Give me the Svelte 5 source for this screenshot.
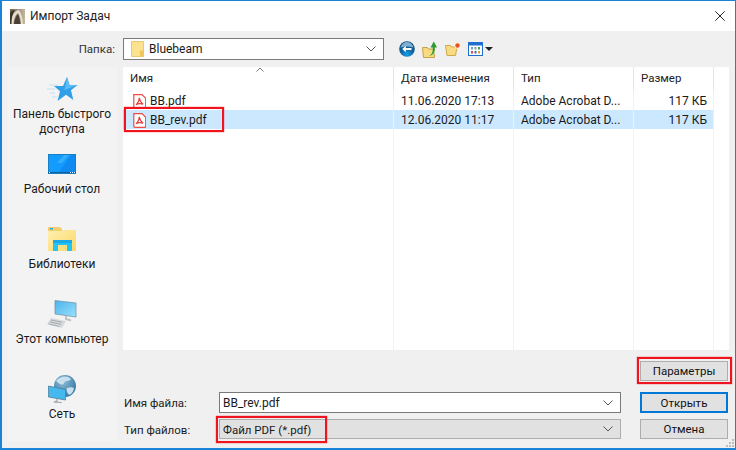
<script>
  const places = [
    { id: 'star', label: ['Панель быстрого', 'доступа'] },
    { id: 'desk', label: ['Рабочий стол'] },
    { id: 'lib', label: ['Библиотеки'] },
    { id: 'pc', label: ['Этот компьютер'] },
    { id: 'net', label: ['Сеть'] }
  ];
  const cols = [
    { name: 'Имя', cls: 'c-name' },
    { name: 'Дата изменения', cls: 'c-date' },
    { name: 'Тип', cls: 'c-type' },
    { name: 'Размер', cls: 'c-size' }
  ];
  const files = [
    { name: 'BB.pdf', date: '11.06.2020 17:13', type: 'Adobe Acrobat D...', size: '117 КБ' },
    { name: 'BB_rev.pdf', date: '12.06.2020 11:17', type: 'Adobe Acrobat D...', size: '117 КБ', sel: true }
  ];
</script>

{#snippet pdf()}
  <svg class="pdf" width="13" height="15" viewBox="0 0 13 15">
    <path d="M1.500.6h7.200l3.700 3.700v9a1 1 0 0 1-1 1h-9.900a1 1 0 0 1-1-1v-12.700z" fill="#fff" stroke="#ee4b45" stroke-width="1.200" transform="translate(.3 0)"/>
    <path d="M6.300 3.800c.6 3 1.700 5 3.800 6.500M6.300 3.800c0 3-1.200 5.200-3.200 7M3.100 10.800c2-1.300 4.400-1.500 7-.5" fill="none" stroke="#e0403a" stroke-width="1.100"/>
  </svg>
{/snippet}

{#snippet chevron()}
  <svg class="chev" width="10" height="6" viewBox="0 0 10 6"><path d="M.5.500 5 5 9.500.5" fill="none" stroke="#555"/></svg>
{/snippet}

<div class="win">
  <header class="title">
    <svg class="appicon" width="15" height="15" viewBox="0 0 15 15">
      <defs><linearGradient id="ap" x1="0" y1="0" x2="1" y2="0"><stop offset="0" stop-color="#6d6350"/><stop offset="1" stop-color="#c4b89f"/></linearGradient></defs>
      <rect width="15" height="15" fill="url(#ap)"/>
      <path d="M0 15C1 7 4 2 9 1c2 3 4 8 4 14h-2C11 10 9.500 6 8 4 5 6 4 10 3.500 15z" fill="#e6dfcf"/>
      <path d="M0 15V4c1-2 3-3 5-3C2.500 4 1.500 9 1.500 15z" fill="#3c3427"/>
      <path d="M4 15c.5-4 2-8 4-10 1 2 2 6 2.500 10z" fill="#4b4132"/>
    </svg>
    <span class="ttl">Импорт Задач</span>
    <svg class="close" width="10" height="10" viewBox="0 0 10 10"><path d="M.3.300l9.400 9.400M9.700.3.300 9.700" stroke="#222" fill="none"/></svg>
  </header>

  <div class="body">
    <div class="folderbar">
      <label class="lbl-folder" for="f">Папка:</label>
      <div class="combo folder" id="f">
        <svg width="13" height="16" viewBox="0 0 13 16">
          <path d="M.5.500h12v15H.5z" fill="#fbe290" stroke="#e8c974"/>
          <path d="M9 9.500h3.500v6H9z" fill="#f0c55c"/>
        </svg>
        <span class="fname">Bluebeam</span>
        {@render chevron()}
      </div>
      <div class="tools">
        <svg width="16" height="16" viewBox="0 0 16 16">
          <defs><radialGradient id="bk" cx=".5" cy=".85" r=".8"><stop offset="0" stop-color="#12a0e8"/><stop offset=".55" stop-color="#135f9a"/><stop offset="1" stop-color="#0f4a7c"/></radialGradient></defs>
          <circle cx="8" cy="8" r="7.800" fill="url(#bk)"/>
          <path d="M1.500 6.500C2.500 3 5 1 8 1s5.500 2 6.500 5.500C10 5 6 5 1.500 6.500z" fill="#7fb0d2"/>
          <path d="M3.200 8l3.600-3.200v2.200h5.700v2.100H6.800v2.200z" fill="#fff"/>
        </svg>
        <svg width="15" height="17" viewBox="0 0 15 17">
          <path d="M.5 6.500h5l1 1.500h5l1 8.500H1.500z" fill="#f8da80" stroke="#c7a244"/>
          <path d="M7 15c3-1.500 4-4 3.800-8.500H8.500L11.800.5 15 6.500h-2.200C13.300 11 11 14.500 7 15z" fill="#2c9a31"/>
        </svg>
        <svg class="newf" width="16" height="14" viewBox="0 0 16 14">
          <path d="M.5 3.500h5l1 1.500h5.500l-1.500 8.500H2z" fill="#f8dc84" stroke="#cfa94a"/>
          <circle cx="12.500" cy="3.500" r="3.200" fill="#fff3d0"/>
          <circle cx="12.500" cy="3.500" r="2.200" fill="#e9502a"/>
        </svg>
        <span class="viewbtn">
          <svg width="15" height="14" viewBox="0 0 15 14">
            <rect x=".5" y=".5" width="14" height="13" fill="#fff" stroke="#1f6fd0"/>
            <rect x="1" y="1" width="13" height="2.500" fill="#1f6fd0"/>
            <path d="M3 5h2v2.500H3z" fill="#6f9bd0"/><path d="M6.500 5h2v2.500h-2z" fill="#8a96a8"/><path d="M10 5h2v2.500h-2z" fill="#49a04a"/>
            <path d="M3 9h2v2.500H3z" fill="#d04a3a"/><path d="M6.500 9h2v2.500h-2z" fill="#2d6cc0"/><path d="M10 9h2v2.500h-2z" fill="#e0a030"/>
          </svg>
          <i class="caret"></i>
        </span>
      </div>
    </div>

    <div class="main">
      <nav class="places">
        {#each places as p}
          <div class="place">
            <div class="picon {p.id}">
              {#if p.id === 'star'}
                <svg width="32" height="25" viewBox="0 2 32 25">
                  <path d="M3 10h9M1 14h8M4 18h5M6 22h5" stroke="#bfe0f5"/>
                  <path d="M21 2l2.500 8h8l-6.500 5.200 2.300 9.800-7.300-5.200L11.500 26l2.500-9.800-6-5.200h9z" fill="#2f9fe8"/>
                  <path d="M21 2l2.500 8h8l-13 5z" fill="#5cbcf5"/>
                </svg>
              {:else if p.id === 'desk'}
                <svg width="28" height="20" viewBox="0 0 28 20">
                  <rect width="28" height="20" fill="#1a7fc0"/>
                  <rect x="1" y="1" width="26" height="17" fill="#139bff"/>
                  <path d="M11 18 23 1h4v17z" fill="#0f8af0"/>
                  <path d="M14 9 21 1h-5L9 9z" fill="#35aeff"/>
                  <path d="M0 18.500h28" stroke="#0f5f98"/>
                  <path d="M1 18.500h1M22 18.500h1M24 18.500h1M26 18.500h1" stroke="#fff"/>
                </svg>
              {:else if p.id === 'lib'}
                <svg width="28" height="24" viewBox="0 0 28 24">
                  <defs><linearGradient id="lf" x1="0" y1="0" x2="1" y2="1"><stop offset="0" stop-color="#ffefb0"/><stop offset="1" stop-color="#fbd768"/></linearGradient></defs>
                  <path d="M0 3h28v21H0z" fill="url(#lf)"/>
                  <path d="M0 0h12l2 2v2H0z" fill="#f2cf6e"/>
                  <path d="M2 1h3v1.500H2z" fill="#2aa8e0"/>
                  <path d="M5 13h19v11h-5v-6h-9v6H5z" fill="#24c3f2"/>
                  <path d="M5 13h19v3H5z" fill="#1aa9e6"/>
                </svg>
              {:else if p.id === 'pc'}
                <svg width="30" height="28" viewBox="0 0 30 28">
                  <defs><linearGradient id="pm" x1="0" y1="0" x2="1" y2="1"><stop offset="0" stop-color="#4ab4ee"/><stop offset="1" stop-color="#9be0fb"/></linearGradient></defs>
                  <path d="M8 .5l21 2.500v14L8 14z" fill="url(#pm)" stroke="#6a8ea4" stroke-width=".7"/>
                  <path d="M19 16v3l5 1.500" stroke="#bcc2c6" stroke-width="2" fill="none"/>
                  <path d="M4 18l15 3-4 7L0 24z" fill="#d6d9db"/>
                  <path d="M4 20l11 2.200M3 22l11 2.300M1.500 24l11 2.500" stroke="#a6abae"/>
                </svg>
              {:else}
                <svg width="28" height="28" viewBox="0 0 28 28">
                  <defs><radialGradient id="gl" cx=".4" cy=".3" r=".8"><stop offset="0" stop-color="#8cbcd8"/><stop offset="1" stop-color="#2c6f9c"/></radialGradient></defs>
                  <circle cx="17" cy="11" r="11" fill="url(#gl)"/>
                  <path d="M8 6c4-5 11-6 15-2-2 3-6 1-7 4s-5 1-8-2zM19 13c3-1 5-1 7 0-1 4-2 6-5 7-2-2-3-5-2-7z" fill="#c8e0ee"/>
                  <path d="M.5 11l17 3.500V25L.5 22z" fill="#45b8ee" stroke="#50809c" stroke-width=".8"/>
                  <path d="M9 24v2l-3 1 8 .8" stroke="#aab2b8" stroke-width="1.400" fill="none"/>
                </svg>
              {/if}
            </div>
            {#each p.label as l}<div class="plabel">{l}</div>{/each}
          </div>
        {/each}
      </nav>

      <div class="right">
        <div class="list">
          <div class="thead">
            {#each cols as c}<div class="th {c.cls}">{c.name}</div>{/each}
            <svg class="sort" width="8" height="5" viewBox="0 0 8 5"><path d="M.5 4.500 4 1l3.500 3.500" fill="none" stroke="#777"/></svg>
          </div>
          {#each files as f}
            <div class="row">
              <div class="cells" class:sel={f.sel}>
                <div class="td c-name">{@render pdf()}<span>{f.name}</span></div>
                <div class="td c-date">{f.date}</div>
                <div class="td c-type">{f.type}</div>
                <div class="td c-size">{f.size}</div>
              </div>
            </div>
          {/each}
          <div class="gridlines">
            <div class="c-name"></div><div class="c-date"></div><div class="c-type"></div><div class="c-size"></div>
          </div>
          <div class="mark mark-file"></div>
        </div>

        <div class="bottom">
          <div class="opts"><button class="btn">Параметры</button><div class="mark mark-opts"></div></div>
          <div class="frow first">
            <span class="flabel">Имя файла:</span>
            <div class="combo fin"><span class="val">BB_rev.pdf</span>{@render chevron()}</div>
            <button class="btn def">Открыть</button>
          </div>
          <div class="frow second">
            <span class="flabel">Тип файлов:</span>
            <div class="combo ftype"><span class="val">Файл PDF (*.pdf)</span>{@render chevron()}<div class="mark mark-type"></div></div>
            <button class="btn">Отмена</button>
          </div>
        </div>
      </div>
    </div>
  </div>
  <svg class="grip" width="8" height="8" viewBox="0 0 8 8">
    <path d="M6 0h2v2H6zM3 3h2v2H3zM6 3h2v2H6zM0 6h2v2H0zM3 6h2v2H3zM6 6h2v2H6z" fill="#bdbdbd"/>
  </svg>
</div>

<style>
  :global(body) { margin: 0; background: #fff; }
  .win {
    position: relative;
    box-sizing: border-box;
    width: 736px;
    height: 450px;
    border: 1px solid #1883d7;
    border-width: 1px 1px 2px 2px;
    background: #f0f0f0;
    display: flex;
    flex-direction: column;
    font: 12px Roboto, "Noto Sans", sans-serif;
    color: #1a1a1a;
    overflow: hidden;
  }
  .title {
    height: 30px;
    flex: none;
    background: #fff;
    display: flex;
    align-items: center;
    padding: 0 10px 0 8px;
    gap: 5px;
  }
  .appicon { flex: none; }
  .ttl { flex: 1; font-size: 12px; color: #222; }
  .close { margin-top: -1px; }
  .body { flex: 1; display: flex; flex-direction: column; min-height: 0; }
  .folderbar { height: 36px; display: flex; align-items: center; flex: none; }
  .lbl-folder { width: 113px; text-align: right; color: #333; font-size: 11.5px; }
  .combo {
    box-sizing: border-box;
    display: flex;
    align-items: center;
    background: #fff;
    border: 1px solid #7a7a7a;
    position: relative;
  }
  .folder { margin-left: 8px; width: 261px; height: 22px; padding: 0 7px 0 7px; gap: 5px; }
  .fname { flex: 1; }
  .tools { margin-left: 15px; display: flex; align-items: center; gap: 7px; }
  .tools .newf { margin-left: 1px; }
  .viewbtn { display: flex; align-items: center; gap: 2px; }
  .caret { width: 0; height: 0; border: 4px solid transparent; border-top-color: #222; border-bottom: 0; }
  .main { flex: 1; display: flex; padding: 0 6px 0 5px; min-height: 0; }
  .places {
    width: 110px;
    flex: none;
    background: #f3f3f3;
    display: flex;
    flex-direction: column;
    margin-bottom: 7px;
  }
  .place { height: 75px; flex: none; display: flex; flex-direction: column; align-items: center; }
  .picon { box-sizing: border-box; height: 40px; display: flex; align-items: flex-end; justify-content: center; flex: none; }
  .picon svg { display: block; }
  .picon.star { padding-bottom: 5px; }
  .picon.desk { padding-bottom: 8px; }
  .picon.lib { padding-bottom: 6px; }
  .picon.pc { padding-bottom: 4px; }
  .picon.net { padding-bottom: 4px; }
  .plabel { line-height: 15px; text-align: center; white-space: nowrap; }
  .right { flex: 1; margin-left: 6px; display: flex; flex-direction: column; min-width: 0; }
  .list { position: relative; background: #fff; height: 283px; flex: none; }
  .thead { display: flex; height: 24px; position: relative; }
  .th { box-sizing: border-box; padding-left: 7px; line-height: 23px; border-right: 1px solid #e5e5e5; color: #222; font-size: 11.5px; }
  .c-name { width: 271px; flex: none; }
  .c-date { width: 120px; flex: none; }
  .c-type { width: 120px; flex: none; }
  .c-size { width: 80px; flex: none; }
  .sort { position: absolute; left: 133px; top: 0; }
  .row { height: 19px; }
  .cells { display: flex; height: 19px; }
  .sel { width: 591px; background: #cce8ff; }
  .td { box-sizing: border-box; padding-left: 7px; padding-top: 1px; line-height: 19px; white-space: nowrap; overflow: hidden; }
  .td.c-name { display: flex; align-items: center; gap: 4px; padding-left: 10px; }
  .td.c-size { text-align: right; padding-right: 7px; }
  .pdf { flex: none; }
  .gridlines { position: absolute; left: 0; top: 24px; bottom: 0; display: flex; pointer-events: none; }
  .gridlines div { box-sizing: border-box; border-right: 1px solid #eaf3fb; }
  .mark { position: absolute; border: 2px solid #f0141e; box-shadow: 0 0 1px #f0141e; pointer-events: none; box-sizing: border-box; }
  .mark-file { left: 1px; top: 40px; width: 100px; height: 25px; }
  .bottom { flex: 1; display: flex; flex-direction: column; }
  .opts { position: relative; display: flex; justify-content: flex-end; margin-top: 11px; height: 20px; flex: none; }
  .mark-opts { left: 514px; top: -4px; width: 95px; height: 27px; }
  .btn {
    box-sizing: border-box;
    width: 88px;
    height: 20px;
    background: #e1e1e1;
    border: 1px solid #adadad;
    font: inherit;
    font-size: 11.5px;
    color: #111;
    padding: 0;
    flex: none;
  }
  .opts .btn { margin-right: 1px; }
  .def { border: 2px solid #0078d7; height: 21px; }
  .frow { display: flex; align-items: center; flex: none; margin-right: 1px; }
  .frow.first { height: 21px; margin-top: 11px; }
  .frow.second { height: 20px; margin-top: 6px; }
  .flabel { width: 96px; flex: none; padding: 1px 0 0 1px; box-sizing: border-box; color: #222; font-size: 11.5px; }
  .fin, .ftype { width: 402px; padding: 0 7px 0 3px; flex: none; margin-right: 19px; justify-content: space-between; }
  .val { padding-top: 1px; }
  .ftype .val { font-size: 11.5px; }
  .fin { height: 21px; }
  .ftype { height: 20px; background: #e1e1e1; border-color: #adadad; }
  .mark-type { left: -4px; top: -4px; width: 111px; height: 27px; }
  .grip { position: absolute; right: 1px; bottom: 1px; }
</style>
